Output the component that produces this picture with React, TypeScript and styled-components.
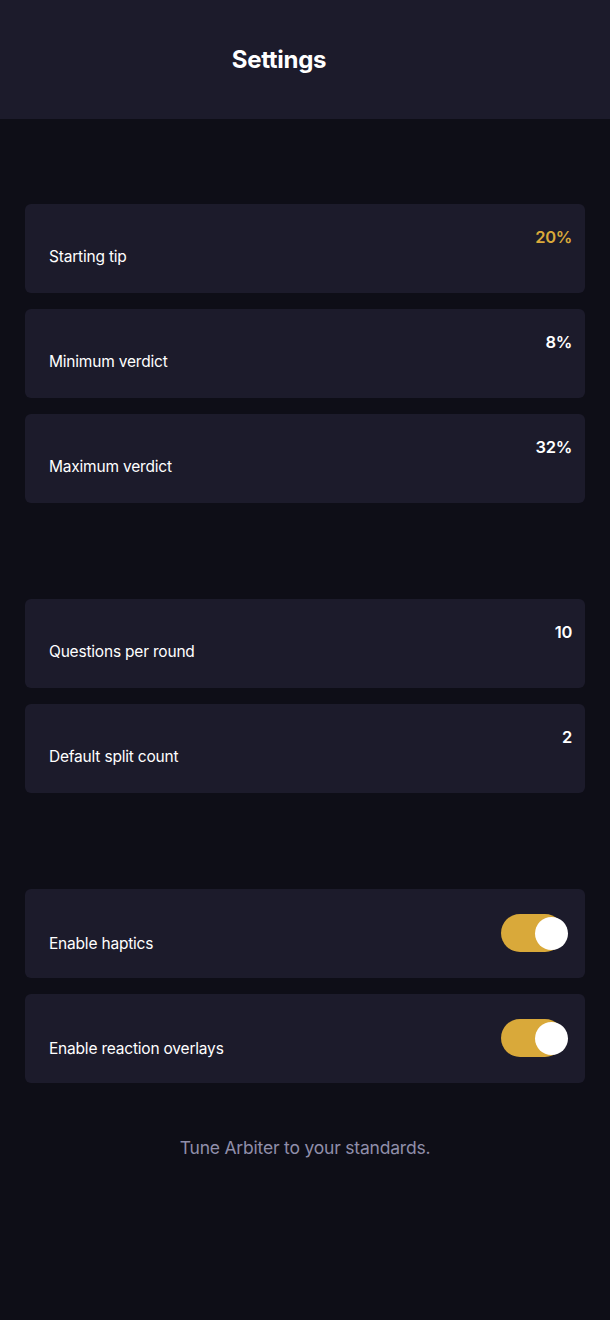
import React from "react";
import styled, { createGlobalStyle } from "styled-components";

const Global = createGlobalStyle`
  html, body { margin: 0; padding: 0; background: #0e0e17; }
  body { font-family: Inter, "Noto Sans", sans-serif; -webkit-font-smoothing: antialiased; }
`;

const Page = styled.div`
  width: 610px;
  min-height: 1320px;
  background: #0e0e17;
  display: flex;
  flex-direction: column;
`;

const Header = styled.header`
  height: 119px;
  background: #1c1b2b;
  display: flex;
  align-items: center;
  justify-content: center;
  padding-right: 52px;
  box-sizing: border-box;
`;

const Title = styled.h1`
  margin: 0;
  color: #ffffff;
  font-size: 24px;
  font-weight: 700;
  letter-spacing: -0.3px;
`;

const Content = styled.main`
  display: flex;
  flex-direction: column;
  padding: 85px 25px 0 25px;
  gap: 96px;
`;

const Section = styled.section`
  display: flex;
  flex-direction: column;
  gap: 16px;
`;

const Card = styled.div`
  height: 89px;
  background: #1c1b2b;
  border-radius: 6px;
  box-sizing: border-box;
  padding: 22px 13px 0 24px;
  display: flex;
  flex-direction: column;
`;

const Value = styled.div<{ $accent?: boolean }>`
  align-self: flex-end;
  height: 22px;
  line-height: 22px;
  font-size: 16.5px;
  font-weight: 600;
  letter-spacing: -0.3px;
  color: ${(p) => (p.$accent ? "#d9a93a" : "#ffffff")};
`;

const Label = styled.div`
  margin-top: -2px;
  line-height: 22px;
  font-size: 15.5px;
  letter-spacing: -0.2px;
  font-weight: 400;
  color: #ffffff;
`;

const ToggleCard = styled(Card)`
  padding-top: 25px;
`;

const Track = styled.div`
  position: relative;
  align-self: flex-end;
  width: 63px;
  height: 38px;
  border-radius: 19px;
  background: #d9a93a;
  margin-right: 8px;
  margin-bottom: -17px;
  flex-shrink: 0;
`;

const Knob = styled.div`
  position: absolute;
  top: 3px;
  right: -4px;
  width: 33px;
  height: 33px;
  border-radius: 50%;
  background: #ffffff;
`;

const Footer = styled.p`
  margin: 53px 0 0 0;
  text-align: center;
  color: #908eaa;
  font-size: 17.5px;
  letter-spacing: -0.2px;
  line-height: 24px;
`;

const Row = ({ label, value, accent }: { label: string; value: string; accent?: boolean }) => (
  <Card>
    <Value $accent={accent}>{value}</Value>
    <Label>{label}</Label>
  </Card>
);

const ToggleRow = ({ label }: { label: string }) => (
  <ToggleCard>
    <Track>
      <Knob />
    </Track>
    <Label>{label}</Label>
  </ToggleCard>
);

export default function App() {
  return (
    <Page>
      <Global />
      <Header>
        <Title>Settings</Title>
      </Header>
      <Content>
        <Section>
          <Row label="Starting tip" value="20%" accent />
          <Row label="Minimum verdict" value="8%" />
          <Row label="Maximum verdict" value="32%" />
        </Section>
        <Section>
          <Row label="Questions per round" value="10" />
          <Row label="Default split count" value="2" />
        </Section>
        <Section>
          <ToggleRow label="Enable haptics" />
          <ToggleRow label="Enable reaction overlays" />
        </Section>
      </Content>
      <Footer>Tune Arbiter to your standards.</Footer>
    </Page>
  );
}
